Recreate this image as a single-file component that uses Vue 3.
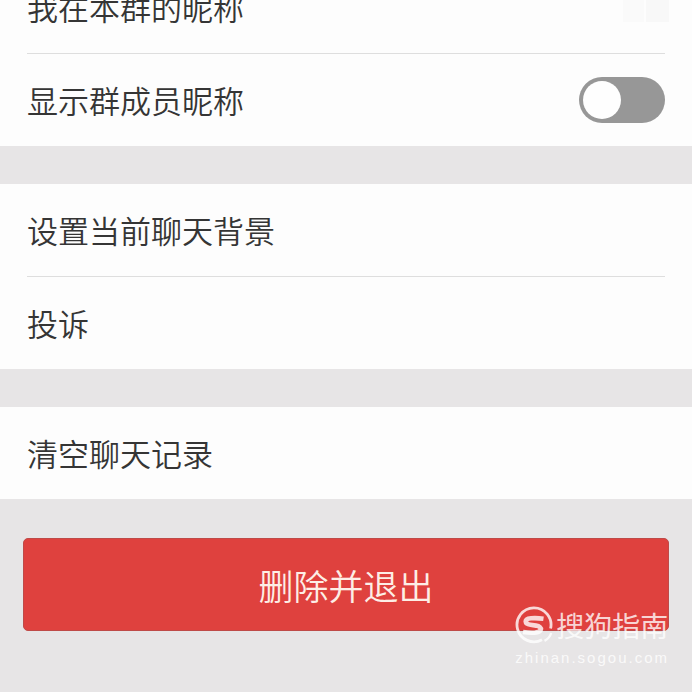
<script setup>
import { ref } from 'vue'

const showNicknames = ref(false)
</script>

<template>
  <main class="page">
    <section class="group">
      <div class="row">
        <a class="label" href="#nickname">我在本群的昵称</a>
        <span class="masked" aria-hidden="true"><i></i><i></i></span>
      </div>
      <div class="row">
        <label class="label" for="show-nicknames">显示群成员昵称</label>
        <input id="show-nicknames" v-model="showNicknames" class="switch" type="checkbox" role="switch">
      </div>
    </section>

    <section class="group">
      <div class="row"><a class="label" href="#background">设置当前聊天背景</a></div>
      <div class="row"><a class="label" href="#report">投诉</a></div>
    </section>

    <section class="group">
      <div class="row"><a class="label" href="#clear">清空聊天记录</a></div>
    </section>

    <footer class="actions">
      <button class="leave" type="button">删除并退出</button>
      <div class="watermark">
        <div class="brand">
          <svg class="logo" viewBox="0 0 38 38" fill="none" stroke="currentColor">
            <path d="M27 33.8A17 17 0 1 1 35.600 22.500" stroke-width="2.800" />
            <path d="M29.500 34.800Q34.500 32.500 36.200 27" stroke-width="2.400" />
            <path d="M28.500 12.800C23 12 19.500 12 16 12.300C8.500 13 9.500 18 15.500 18.800L21 19.600C28.500 21 27 26 19.500 26.700C16 27 12.500 26.700 8 26" stroke-width="4.600" />
          </svg>
          <span class="name">搜狗指南</span>
        </div>
        <div class="site">zhinan.sogou.com</div>
      </div>
    </footer>
  </main>
</template>

<style>
body {
  margin: 0;
  background: #e7e5e6;
}
</style>

<style scoped>
.page {
  display: flex;
  flex-direction: column;
  gap: 38px;
  margin-top: -39px;
  font-family: "Noto Sans CJK SC", sans-serif;
  color: #353535;
}

.group {
  padding: 0 27px;
  background: #fdfdfd;
}

.row {
  display: flex;
  align-items: center;
  justify-content: space-between;
  height: 92px;
}

.row + .row {
  border-top: 1px solid #dedede;
}

.label {
  font-size: 31px;
  font-weight: 350;
  line-height: 44px;
  color: inherit;
  text-decoration: none;
}

.masked {
  display: flex;
  gap: 2px;
  margin-right: -4px;
}

.masked i {
  width: 21px;
  height: 30px;
  background: #fafafa;
}

.masked i + i {
  width: 23px;
  background: #f8f8f8;
}

.switch {
  appearance: none;
  display: flex;
  align-items: center;
  box-sizing: border-box;
  width: 86px;
  height: 46px;
  margin: 0;
  padding: 0 4px;
  border-radius: 23px;
  background: #979797;
}

.switch::before {
  content: "";
  width: 38px;
  height: 38px;
  border-radius: 50%;
  background: #fefefe;
}

.switch:checked {
  justify-content: flex-end;
  background: #45c01a;
}

.actions {
  position: relative;
  padding: 1px 23px 61px;
}

.leave {
  display: block;
  width: 100%;
  height: 93px;
  padding: 0;
  border: 1px solid #bf4a48;
  border-radius: 5px;
  background: #df413e;
  color: #fdeee6;
  font-family: inherit;
  font-size: 35px;
  font-weight: 350;
  line-height: 50px;
}

.watermark {
  position: absolute;
  right: 23px;
  bottom: 22px;
  color: rgba(255, 255, 255, 0.8);
}

.brand {
  display: flex;
  align-items: center;
  gap: 3px;
}

.logo {
  width: 38px;
  height: 38px;
}

.name {
  font-size: 28px;
  line-height: 42px;
}

.site {
  font-family: "Liberation Sans", sans-serif;
  font-size: 15px;
  line-height: 24px;
  letter-spacing: 2px;
}
</style>
